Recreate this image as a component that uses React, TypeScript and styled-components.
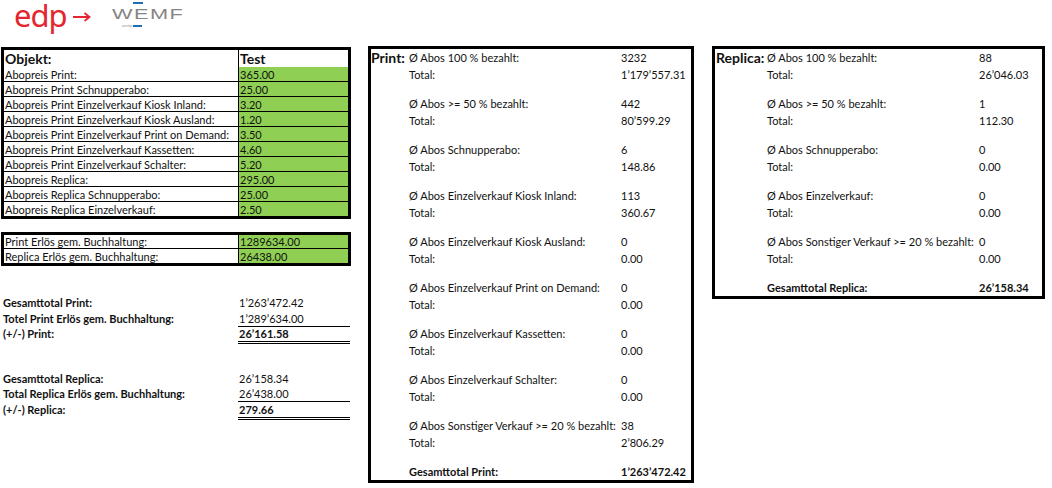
import styled, { createGlobalStyle } from 'styled-components';

const GlobalStyle = createGlobalStyle`
  body {
    margin: 0;
    background: #fff;
    color: #111;
    font-family: Lato, "Open Sans", sans-serif;
    font-size: 11px;
  }
`;

const Page = styled.div`
  width: 1052px;
  height: 488px;
  overflow: hidden;
  background: #fff;
`;

const Header = styled.header`
  height: 46px;
  display: flex;
  align-items: flex-start;
  padding-left: 14px;
  gap: 20px;
`;

const EdpLogo = styled.div`
  display: flex;
  align-items: center;
  gap: 5px;
  color: #e3262f;
  font-family: "Noto Sans", "Open Sans", sans-serif;
  font-size: 31px;
  line-height: 28px;
  letter-spacing: -1px;
  padding-top: 1px;
`;

const WemfLogo = styled.div`
  position: relative;
  margin-top: 6px;
  width: 76px;
  height: 24px;
`;

const WemfText = styled.span`
  display: inline-block;
  color: #858585;
  font-family: "Liberation Sans", sans-serif;
  font-size: 15px;
  line-height: 15px;
  letter-spacing: 1px;
  transform: scaleX(1.45);
  transform-origin: left center;
`;

const BlueBar = styled.span<{ $left: number; $top: number; $w: number }>`
  position: absolute;
  left: ${(p) => p.$left}px;
  top: ${(p) => p.$top}px;
  width: ${(p) => p.$w}px;
  height: 2px;
  background: #1f6db5;
`;

const TinyMark = styled.span`
  position: absolute;
  left: 10px;
  top: 18px;
  font-family: "Liberation Sans", sans-serif;
  font-size: 4px;
  line-height: 4px;
  color: #9a9a9a;
`;

const Main = styled.main`
  display: flex;
  align-items: flex-start;
  padding-left: 1px;
`;

const LeftCol = styled.div`
  width: 350px;
  margin-top: 1px;
  display: flex;
  flex-direction: column;
`;

const Table = styled.div<{ $mt?: number }>`
  border: 3px solid #000;
  margin-top: ${(p) => p.$mt ?? 0}px;
`;

const Row = styled.div<{ $h: number }>`
  display: grid;
  grid-template-columns: 234px 1fr;
  height: ${(p) => p.$h}px;
  box-sizing: border-box;
  & + & {
    border-top: 1px solid #000;
  }
`;

const Cell = styled.div<{ $green?: boolean; $head?: boolean }>`
  padding-left: 1px;
  display: flex;
  align-items: center;
  white-space: nowrap;
  background: ${(p) => (p.$green ? '#8fcf54' : '#fff')};
  border-left: ${(p) => (p.$green || p.$head ? '1px solid #000' : 'none')};
`;

const HeadCell = styled(Cell)`
  font-weight: bold;
  font-size: 14px;
`;

const Summary = styled.div<{ $mt: number }>`
  margin-top: ${(p) => p.$mt}px;
`;

const SumRow = styled.div`
  display: grid;
  grid-template-columns: 237px 112px;
  height: 15.5px;
  line-height: 15px;
`;

const SumLabel = styled.div`
  padding-left: 2px;
  font-weight: bold;
  white-space: nowrap;
`;

const SumValue = styled.div<{ $line?: 'single' | 'double'; $bold?: boolean }>`
  padding-left: 1px;
  font-weight: ${(p) => (p.$bold ? 'bold' : 'normal')};
  box-sizing: border-box;
  border-bottom: ${(p) =>
    p.$line === 'single' ? '1px solid #000' : p.$line === 'double' ? '3px double #000' : 'none'};
`;

const Panel = styled.section<{ $ml: number; $w: number; $pl: number }>`
  margin-left: ${(p) => p.$ml}px;
  width: ${(p) => p.$w}px;
  box-sizing: border-box;
  border: 3px solid #000;
  display: flex;
  padding-left: ${(p) => p.$pl}px;
`;

const PanelTitle = styled.div<{ $w: number }>`
  width: ${(p) => p.$w}px;
  flex: none;
  font-weight: bold;
  font-size: 14px;
  line-height: 17px;
`;

const PanelBody = styled.div`
  flex: 1;
  display: flex;
  flex-direction: column;
`;

const Group = styled.div`
  margin-bottom: 12px;
`;

const Line = styled.div<{ $bold?: boolean }>`
  display: grid;
  grid-template-columns: 212px 1fr;
  height: 17px;
  line-height: 17px;
  white-space: nowrap;
  font-weight: ${(p) => (p.$bold ? 'bold' : 'normal')};
`;

const G = '\u2019';

const objekte: [string, string][] = [
  ['Abopreis Print:', '365.00'],
  ['Abopreis Print Schnupperabo:', '25.00'],
  ['Abopreis Print Einzelverkauf Kiosk Inland:', '3.20'],
  ['Abopreis Print Einzelverkauf Kiosk Ausland:', '1.20'],
  ['Abopreis Print Einzelverkauf Print on Demand:', '3.50'],
  ['Abopreis Print Einzelverkauf Kassetten:', '4.60'],
  ['Abopreis Print Einzelverkauf Schalter:', '5.20'],
  ['Abopreis Replica:', '295.00'],
  ['Abopreis Replica Schnupperabo:', '25.00'],
  ['Abopreis Replica Einzelverkauf:', '2.50'],
];

const printRows: [string, string, string][] = [
  ['Ø Abos 100 % bezahlt:', '3232', `1${G}179${G}557.31`],
  ['Ø Abos >= 50 % bezahlt:', '442', `80${G}599.29`],
  ['Ø Abos Schnupperabo:', '6', '148.86'],
  ['Ø Abos Einzelverkauf Kiosk Inland:', '113', '360.67'],
  ['Ø Abos Einzelverkauf Kiosk Ausland:', '0', '0.00'],
  ['Ø Abos Einzelverkauf Print on Demand:', '0', '0.00'],
  ['Ø Abos Einzelverkauf Kassetten:', '0', '0.00'],
  ['Ø Abos Einzelverkauf Schalter:', '0', '0.00'],
  ['Ø Abos Sonstiger Verkauf >= 20 % bezahlt:', '38', `2${G}806.29`],
];

const replicaRows: [string, string, string][] = [
  ['Ø Abos 100 % bezahlt:', '88', `26${G}046.03`],
  ['Ø Abos >= 50 % bezahlt:', '1', '112.30'],
  ['Ø Abos Schnupperabo:', '0', '0.00'],
  ['Ø Abos Einzelverkauf:', '0', '0.00'],
  ['Ø Abos Sonstiger Verkauf >= 20 % bezahlt:', '0', '0.00'],
];

function ResultPanel({
  title,
  titleWidth,
  ml,
  w,
  pl,
  rows,
  totalLabel,
  total,
}: {
  title: string;
  titleWidth: number;
  ml: number;
  w: number;
  pl: number;
  rows: [string, string, string][];
  totalLabel: string;
  total: string;
}) {
  return (
    <Panel $ml={ml} $w={w} $pl={pl}>
      <PanelTitle $w={titleWidth}>{title}</PanelTitle>
      <PanelBody>
        {rows.map(([label, count, sum]) => (
          <Group key={label}>
            <Line>
              <span>{label}</span>
              <span>{count}</span>
            </Line>
            <Line>
              <span>Total:</span>
              <span>{sum}</span>
            </Line>
          </Group>
        ))}
        <Line $bold>
          <span>{totalLabel}</span>
          <span>{total}</span>
        </Line>
      </PanelBody>
    </Panel>
  );
}

export default function App() {
  return (
    <Page>
      <GlobalStyle />
      <Header>
        <EdpLogo>
          <span>edp</span>
          <svg width="20" height="12" viewBox="0 0 20 12" style={{ marginTop: 4 }}>
            <path d="M1 6 H17 M12.5 2 L17.5 6 L12.5 10" fill="none" stroke="#e3262f" strokeWidth="1.8" />
          </svg>
        </EdpLogo>
        <WemfLogo>
          <WemfText>WEMF</WemfText>
          <BlueBar $left={21} $top={-4} $w={10} />
          <TinyMark>wemp</TinyMark>
          <BlueBar $left={21} $top={19} $w={9} />
        </WemfLogo>
      </Header>
      <Main>
        <LeftCol>
          <Table>
            <Row $h={16}>
              <HeadCell>Objekt:</HeadCell>
              <HeadCell $head>Test</HeadCell>
            </Row>
            {objekte.map(([label, value]) => (
              <Row $h={15} key={label}>
                <Cell>{label}</Cell>
                <Cell $green>{value}</Cell>
              </Row>
            ))}
          </Table>
          <Table $mt={13}>
            <Row $h={13}>
              <Cell>Print Erlös gem. Buchhaltung:</Cell>
              <Cell $green>1289634.00</Cell>
            </Row>
            <Row $h={15}>
              <Cell>Replica Erlös gem. Buchhaltung:</Cell>
              <Cell $green>26438.00</Cell>
            </Row>
          </Table>
          <Summary $mt={29}>
            <SumRow>
              <SumLabel>Gesamttotal Print:</SumLabel>
              <SumValue>{`1${G}263${G}472.42`}</SumValue>
            </SumRow>
            <SumRow>
              <SumLabel>Totel Print Erlös gem. Buchhaltung:</SumLabel>
              <SumValue $line="single">{`1${G}289${G}634.00`}</SumValue>
            </SumRow>
            <SumRow>
              <SumLabel>(+/-) Print:</SumLabel>
              <SumValue $line="double" $bold>{`26${G}161.58`}</SumValue>
            </SumRow>
          </Summary>
          <Summary $mt={29}>
            <SumRow>
              <SumLabel>Gesamttotal Replica:</SumLabel>
              <SumValue>{`26${G}158.34`}</SumValue>
            </SumRow>
            <SumRow>
              <SumLabel>Total Replica Erlös gem. Buchhaltung:</SumLabel>
              <SumValue $line="single">{`26${G}438.00`}</SumValue>
            </SumRow>
            <SumRow>
              <SumLabel>(+/-) Replica:</SumLabel>
              <SumValue $line="double" $bold>279.66</SumValue>
            </SumRow>
          </Summary>
        </LeftCol>
        <ResultPanel
          title="Print:"
          titleWidth={38}
          ml={17}
          w={326}
          pl={0}
          rows={printRows}
          totalLabel="Gesamttotal Print:"
          total={`1${G}263${G}472.42`}
        />
        <ResultPanel
          title="Replica:"
          titleWidth={51}
          ml={18}
          w={333}
          pl={1}
          rows={replicaRows}
          totalLabel="Gesamttotal Replica:"
          total={`26${G}158.34`}
        />
      </Main>
    </Page>
  );
}
